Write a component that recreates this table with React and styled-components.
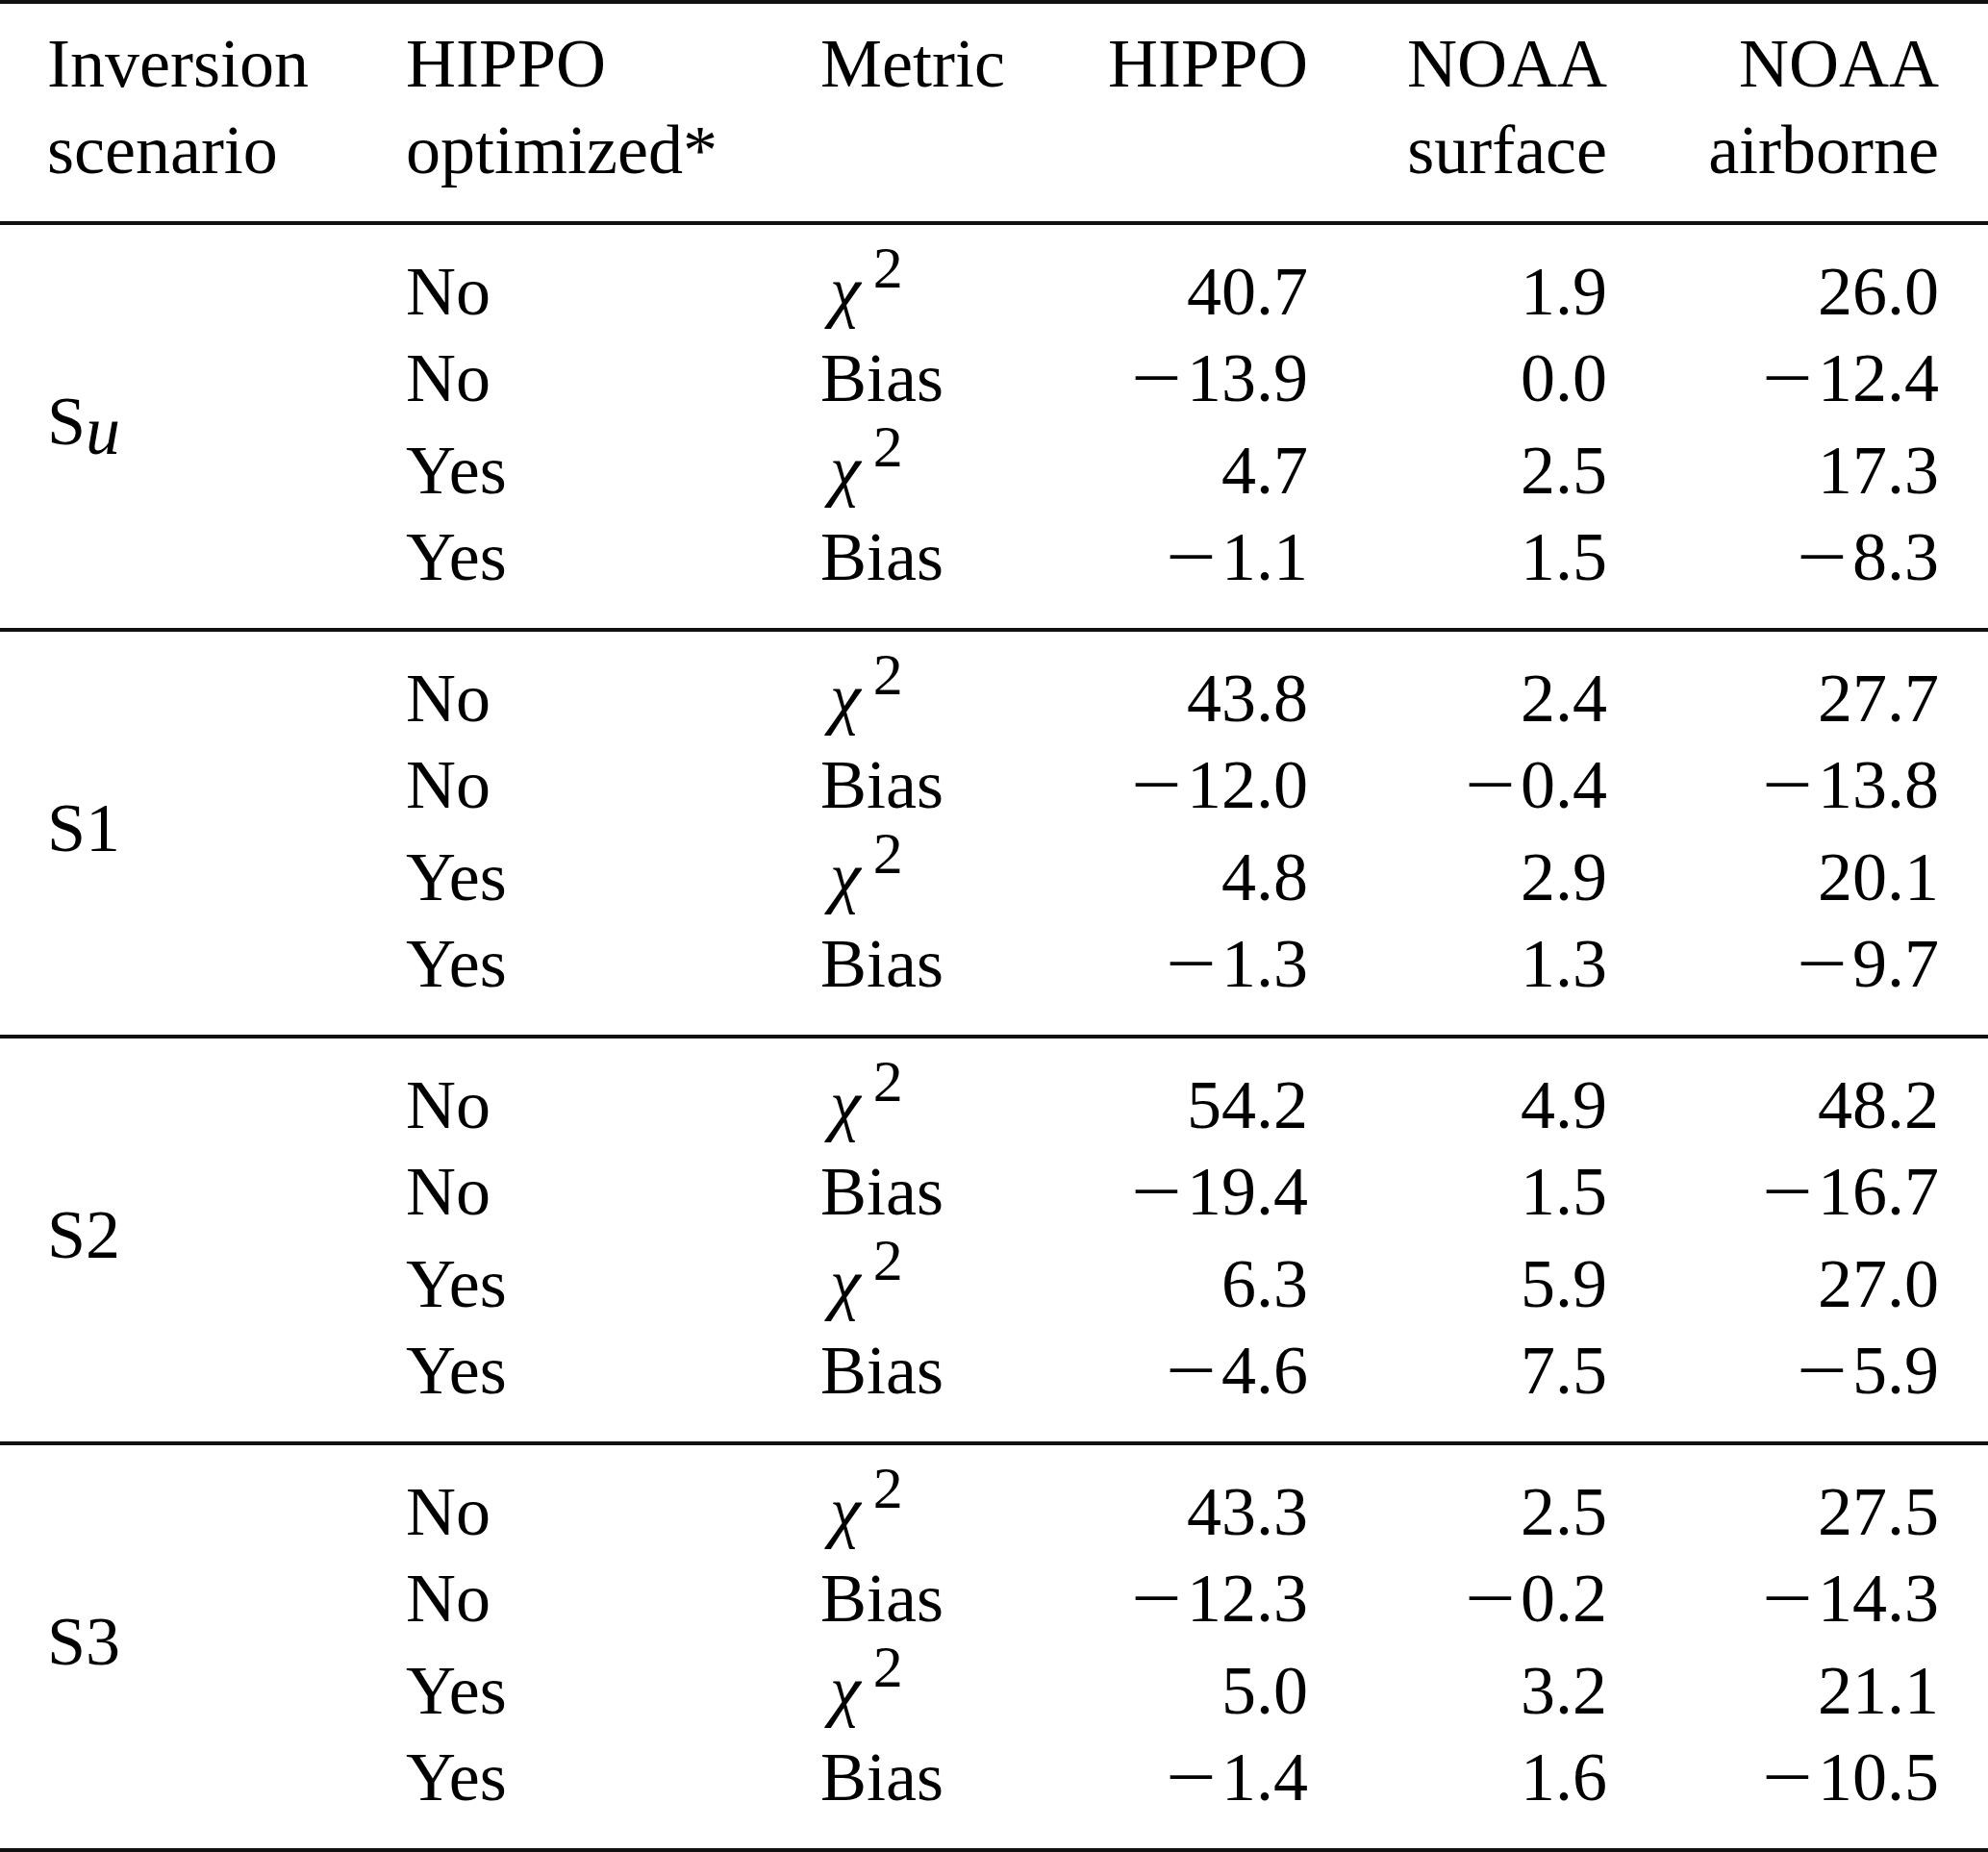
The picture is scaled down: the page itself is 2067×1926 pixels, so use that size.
import React from "react";
import styled, { createGlobalStyle } from "styled-components";

const GlobalStyle = createGlobalStyle`
  html, body {
    margin: 0;
    padding: 0;
    background: #fff;
    overflow: hidden;
  }
`;

const COLS = "431px 247px 260px 311px 345px";

const Table = styled.div`
  width: 2067px;
  border-top: 4px solid #111;
  border-bottom: 4px solid #111;
  font-family: "Liberation Serif", "Times New Roman", serif;
  font-size: 72px;
  line-height: 90px;
  color: #000;
`;

const Header = styled.div`
  display: grid;
  grid-template-columns: 373px ${COLS};
  padding: 17.4px 51px 28.6px 49px;
`;

const HeadCell = styled.div`
  text-align: ${({ $right }) => ($right ? "right" : "left")};
  white-space: nowrap;
`;

const Section = styled.div`
  display: flex;
  border-top: 4px solid #111;
  padding: 18px 51px 29px 49px;
`;

const Scenario = styled.div`
  width: 373px;
  flex: none;
  display: flex;
  align-items: center;
`;

const ScenarioLabel = styled.span`
  white-space: nowrap;
`;

const Rows = styled.div`
  display: flex;
  flex-direction: column;
`;

const Row = styled.div`
  display: grid;
  grid-template-columns: ${COLS};
  padding-top: ${({ $tall }) => ($tall ? "6px" : "0")};
`;

const Cell = styled.div`
  text-align: ${({ $right }) => ($right ? "right" : "left")};
  white-space: nowrap;
`;

const Chi = styled.span`
  font-style: italic;
  padding-left: 10px;
`;

const Sup = styled.span`
  font-size: 62px;
  line-height: 0;
  vertical-align: 28px;
  margin-left: 13px;
`;

const Sub = styled.span`
  font-style: italic;
  line-height: 0;
  vertical-align: -10px;
`;

const Minus = styled.span`
  display: inline-block;
  transform: scaleX(1.3);
  margin-right: 11px;
`;

const Metric = ({ kind }) =>
  kind === "chi" ? (
    <>
      <Chi>χ</Chi>
      <Sup>2</Sup>
    </>
  ) : (
    "Bias"
  );

const Num = ({ value }) =>
  value.startsWith("−") ? (
    <>
      <Minus>−</Minus>
      {value.slice(1)}
    </>
  ) : (
    value
  );

const sections = [
  {
    name: (
      <>
        S<Sub>u</Sub>
      </>
    ),
    rows: [
      ["No", "chi", "40.7", "1.9", "26.0"],
      ["No", "bias", "−13.9", "0.0", "−12.4"],
      ["Yes", "chi", "4.7", "2.5", "17.3"],
      ["Yes", "bias", "−1.1", "1.5", "−8.3"],
    ],
  },
  {
    name: "S1",
    rows: [
      ["No", "chi", "43.8", "2.4", "27.7"],
      ["No", "bias", "−12.0", "−0.4", "−13.8"],
      ["Yes", "chi", "4.8", "2.9", "20.1"],
      ["Yes", "bias", "−1.3", "1.3", "−9.7"],
    ],
  },
  {
    name: "S2",
    rows: [
      ["No", "chi", "54.2", "4.9", "48.2"],
      ["No", "bias", "−19.4", "1.5", "−16.7"],
      ["Yes", "chi", "6.3", "5.9", "27.0"],
      ["Yes", "bias", "−4.6", "7.5", "−5.9"],
    ],
  },
  {
    name: "S3",
    rows: [
      ["No", "chi", "43.3", "2.5", "27.5"],
      ["No", "bias", "−12.3", "−0.2", "−14.3"],
      ["Yes", "chi", "5.0", "3.2", "21.1"],
      ["Yes", "bias", "−1.4", "1.6", "−10.5"],
    ],
  },
];

export default function App() {
  return (
    <>
      <GlobalStyle />
      <Table>
        <Header>
          <HeadCell>
            Inversion
            <br />
            scenario
          </HeadCell>
          <HeadCell>
            HIPPO
            <br />
            optimized*
          </HeadCell>
          <HeadCell>Metric</HeadCell>
          <HeadCell $right>HIPPO</HeadCell>
          <HeadCell $right>
            NOAA
            <br />
            surface
          </HeadCell>
          <HeadCell $right>
            NOAA
            <br />
            airborne
          </HeadCell>
        </Header>
        {sections.map((s, i) => (
          <Section key={i}>
            <Scenario>
              <ScenarioLabel>{s.name}</ScenarioLabel>
            </Scenario>
            <Rows>
              {s.rows.map((r, j) => (
                <Row key={j} $tall={r[1] === "chi"}>
                  <Cell>{r[0]}</Cell>
                  <Cell>
                    <Metric kind={r[1]} />
                  </Cell>
                  <Cell $right>
                    <Num value={r[2]} />
                  </Cell>
                  <Cell $right>
                    <Num value={r[3]} />
                  </Cell>
                  <Cell $right>
                    <Num value={r[4]} />
                  </Cell>
                </Row>
              ))}
            </Rows>
          </Section>
        ))}
      </Table>
    </>
  );
}
